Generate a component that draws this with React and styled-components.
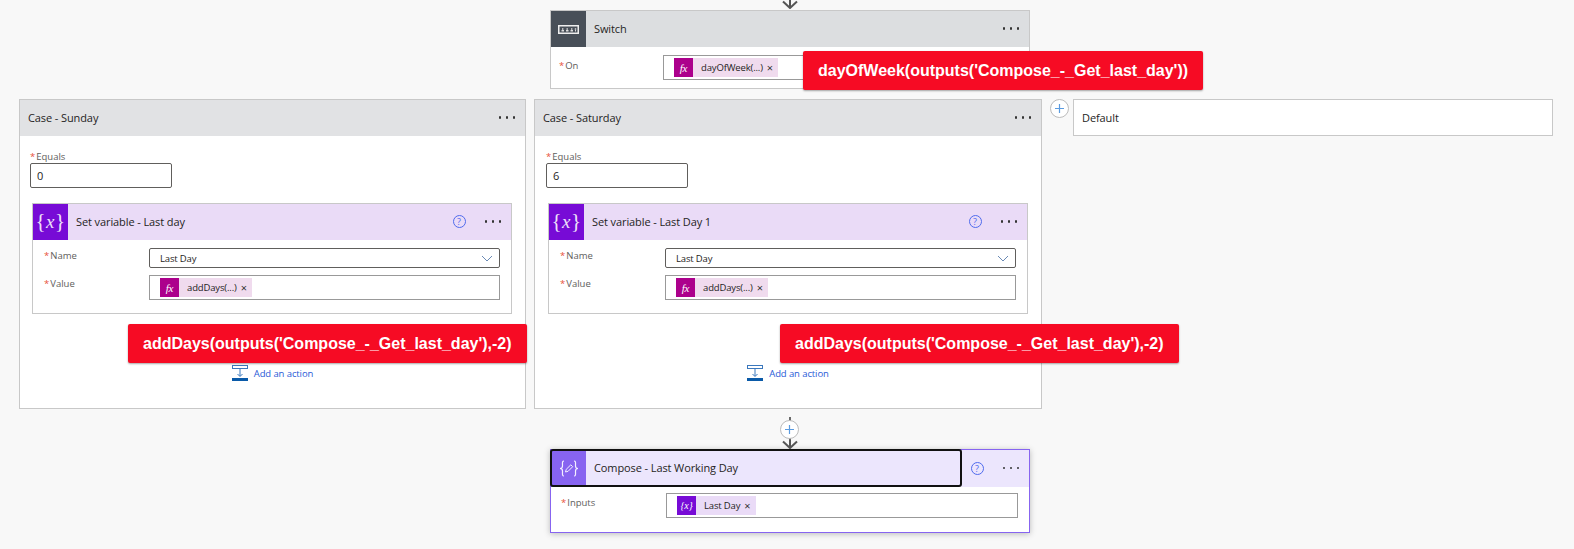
import React from 'react';
import styled, { createGlobalStyle } from 'styled-components';

const Global = createGlobalStyle`
  html, body { margin: 0; padding: 0; background: #f8f8f8; }
  body { font-family: "Open Sans", "Noto Sans", sans-serif; font-size: 11px; color: #252423; }
`;

const Page = styled.div`
  position: relative;
  width: 1574px;
  height: 549px;
  overflow: hidden;
  display: flex;
  flex-direction: column;
  background: #f8f8f8;
`;

const TopArrow = styled.div`
  height: 10px;
  padding-left: 782px;
  line-height: 0;
`;

const Card = styled.div`
  position: relative;
  box-sizing: border-box;
  width: 480px;
  flex: none;
  background: #fff;
  border: 1px solid ${(p) => p.$border || '#c8c8c8'};
  box-shadow: ${(p) => (p.$shadow ? '0 1px 6px rgba(0,0,0,.25)' : 'none')};
`;

const CenterCard = styled(Card)`
  margin-left: 550px;
  height: ${(p) => p.$h}px;
`;

const Header = styled.div`
  position: relative;
  display: flex;
  align-items: center;
  height: ${(p) => p.$h || 36}px;
  background: ${(p) => p.$bg || '#e1e2e4'};
`;

const IconBox = styled.div`
  width: 35px;
  align-self: stretch;
  flex: none;
  display: flex;
  align-items: center;
  justify-content: center;
  background: ${(p) => p.$bg};
  color: #fff;
`;

const Title = styled.div`
  flex: 1;
  padding: 0 0 2px 8px;
  font-size: 11px;
  letter-spacing: -0.1px;
  color: #252423;
  white-space: nowrap;
`;

const Dots = styled.div`
  display: flex;
  gap: 4.5px;
  margin-right: 10px;
  margin-bottom: 1px;
  & > i { width: 2.5px; height: 2.5px; border-radius: 50%; background: #333; display: block; }
`;

const Help = styled.div`
  width: 13px;
  height: 13px;
  box-sizing: border-box;
  border: 1px solid #4f6bed;
  border-radius: 50%;
  color: #4f6bed;
  font-size: 9px;
  line-height: 11px;
  text-align: center;
  margin: 0 19px 1px 0;
`;

const Row = styled.div`
  display: flex;
  align-items: flex-start;
  padding-left: ${(p) => p.$left}px;
  padding-top: ${(p) => p.$top}px;
  padding-right: ${(p) => p.$right || 0}px;
`;

const Label = styled.div`
  width: ${(p) => p.$w}px;
  flex: none;
  padding-top: ${(p) => p.$top || 0}px;
  font-size: 9.5px;
  line-height: 14px;
  color: #605e5c;
  white-space: nowrap;
  & > b { color: #e8503a; font-weight: 400; margin-right: 1px; }
`;

const Field = styled.div`
  box-sizing: border-box;
  flex: ${(p) => (p.$w ? 'none' : 1)};
  width: ${(p) => (p.$w ? `${p.$w}px` : 'auto')};
  display: flex;
  align-items: center;
  justify-content: space-between;
  height: ${(p) => p.$h || 25}px;
  padding: 0 6px 0 ${(p) => p.$pad || 10}px;
  background: #fff;
  border: 1px solid ${(p) => p.$border || '#999'};
  border-radius: ${(p) => (p.$dark ? 2 : 0)}px;
`;

const Chip = styled.div`
  display: flex;
  align-items: center;
  height: 19px;
  background: ${(p) => p.$bg};
  font-size: 9.5px;
  letter-spacing: -0.15px;
  color: #252423;
  white-space: nowrap;
  & > span { margin-left: 8px; }
  & > em { font-style: normal; font-size: 11px; color: #333; margin: 0 5px 0 4px; }
`;

const PlainValue = styled.span`
  font-size: 9.5px;
  letter-spacing: -0.15px;
  color: #252423;
`;

const ChipIcon = styled.div`
  width: 19px;
  height: 19px;
  flex: none;
  display: flex;
  align-items: center;
  justify-content: center;
  background: ${(p) => p.$bg};
  color: #fff;
  font-family: "Liberation Serif", serif;
  font-style: italic;
  font-size: ${(p) => p.$size || 11}px;
`;

const Note = styled.div`
  position: absolute;
  left: ${(p) => p.$left}px;
  top: ${(p) => p.$top}px;
  height: 39px;
  box-sizing: border-box;
  padding: 0 15px;
  display: flex;
  align-items: center;
  background: #f60b24;
  border-radius: 2px;
  box-shadow: 0 1px 2px rgba(0,0,0,.35);
  color: #fff;
  font-family: "Liberation Sans", Arial, sans-serif;
  font-weight: 700;
  font-size: 16px;
  white-space: nowrap;
  z-index: 2;
`;

const CaseRow = styled.div`
  display: flex;
  align-items: flex-start;
  padding-left: 19px;
  margin-top: 10px;
  gap: 8px;
`;

const CaseCard = styled(Card)`
  width: ${(p) => p.$w || 508}px;
  height: 310px;
`;

const Body = styled.div`
  padding: 14px 0 0 ${(p) => p.$left}px;
`;

const EqualsLabel = styled(Label)`
  line-height: 13px;
  height: 13px;
`;

const EqualsInput = styled.div`
  box-sizing: border-box;
  width: 141.5px;
  height: 25px;
  padding-left: 6px;
  display: flex;
  align-items: center;
  border: 1px solid #605e5c;
  border-radius: 2px;
  font-size: 11px;
  color: #252423;
`;

const InnerWrap = styled.div`
  padding-left: ${(p) => p.$left}px;
`;

const Inner = styled(Card)`
  margin-top: 15px;
  height: 111px;
`;

const AddAction = styled.div`
  display: flex;
  align-items: center;
  justify-content: center;
  gap: 6px;
  margin: 51px 0 0 ${(p) => -p.$left}px;
  font-size: 9.5px;
  letter-spacing: -0.1px;
  color: #2a5bd7;
`;

const DefaultWrap = styled.div`
  display: flex;
  align-items: flex-start;
  gap: 4px;
`;

const Plus = styled.div`
  box-sizing: border-box;
  width: 19px;
  height: 19px;
  flex: none;
  display: flex;
  align-items: center;
  justify-content: center;
  background: #fff;
  border: 1.5px solid #bcbcbc;
  border-radius: 50%;
  position: relative;
`;

const ConnectorPlus = styled(Plus)`
  margin-top: 3px;
  z-index: 1;
`;

const DefaultCard = styled.div`
  box-sizing: border-box;
  width: 480px;
  height: 37px;
  padding-left: 8px;
  display: flex;
  align-items: center;
  background: #fff;
  border: 1px solid #c8c8c8;
  font-size: 11px;
  letter-spacing: -0.1px;
`;

const Connector = styled.div`
  position: relative;
  height: 40px;
  display: flex;
  flex-direction: column;
  align-items: center;
  width: 19px;
  margin-left: 780px;
  padding-top: 8px;
  box-sizing: border-box;
  &::before {
    content: '';
    position: absolute;
    left: 8.5px;
    top: 8px;
    width: 2px;
    height: 26px;
    background: #6a6a6a;
  }
`;

const ConnectorArrow = styled.div`
  position: absolute;
  left: 1.5px;
  top: 31px;
  line-height: 0;
  z-index: 2;
`;

const FocusRing = styled.div`
  position: absolute;
  left: -1px;
  top: -1px;
  width: 412px;
  height: 38px;
  box-sizing: border-box;
  border: 2px solid #111;
  border-radius: 3px;
  pointer-events: none;
`;

const Serif = styled.span`
  font-family: "Liberation Serif", serif;
  font-size: ${(p) => p.$size}px;
  line-height: 1;
  letter-spacing: 0.5px;
  opacity: .88;
  margin-bottom: 2px;
  & > i { font-size: ${(p) => p.$size - 2}px; }
`;

const MoreDots = () => (
  <Dots><i /><i /><i /></Dots>
);

const ArrowDown = () => (
  <svg width="16" height="9" viewBox="0 0 16 9" fill="none" stroke="#555" strokeWidth="2">
    <path d="M8 0V8M1 1.5L8 8L15 1.5" />
  </svg>
);

const PlusIcon = () => (
  <svg width="9" height="9" viewBox="0 0 9 9" stroke="#5b9be0" strokeWidth="1.2">
    <path d="M4.5 0V9M0 4.5H9" />
  </svg>
);

const Chevron = () => (
  <svg width="12" height="7" viewBox="0 0 12 7" fill="none" stroke="#6a8ab5" strokeWidth="1">
    <path d="M1 1L6 6L11 1" />
  </svg>
);

const SwitchIcon = () => (
  <svg width="21" height="9" viewBox="0 0 21 9" fill="none">
    <rect x="0.75" y="0.75" width="19.5" height="7.5" stroke="#eee" strokeWidth="1.5" />
    <path d="M3.5 5.8h2.5M8 5.8h2.5M12.5 5.8h2.5M17 5.8h1M4.7 3.2v1.5M9.2 3.2v1.5M13.7 3.2v1.5M17.5 3.2v1.5" stroke="#ddd" strokeWidth="1.4" />
  </svg>
);

const AddIcon = () => (
  <svg width="16" height="16" viewBox="0 0 16 16" fill="none">
    <rect x="0.5" y="0.5" width="15" height="3" stroke="#3b78bd" />
    <path d="M8 4V11M5.5 9L8 11.5L10.5 9" stroke="#3b78bd" />
    <rect x="0" y="13" width="16" height="3" fill="#0a5aa8" />
  </svg>
);

const ComposeIcon = () => (
  <svg width="20" height="19" viewBox="0 0 20 19" fill="none" stroke="#f4f0ff">
    <path d="M5 2C3 2 3.5 4 3.5 7C3.5 8.5 3 9.5 1 9.5C3 9.5 3.5 10.5 3.5 12C3.5 15 3 17 5 17" strokeWidth="1.2" />
    <path d="M15 2C17 2 16.5 4 16.5 7C16.5 8.5 17 9.5 19 9.5C17 9.5 16.5 10.5 16.5 12C16.5 15 17 17 15 17" strokeWidth="1.2" />
    <path d="M6.5 13L7.2 10.4L11.8 5.8L13.7 7.7L9.1 12.3Z" strokeWidth="1" />
  </svg>
);

const VariableCard = ({ title }) => (
  <Inner>
    <Header $bg="#eadbf7">
      <IconBox $bg="#770bd6">
        <Serif $size={21}>{'{'}<i>x</i>{'}'}</Serif>
      </IconBox>
      <Title>{title}</Title>
      <Help>?</Help>
      <MoreDots />
    </Header>
    <Row $left={11} $top={8} $right={11}>
      <Label $w={105} $top={1}><b>*</b>Name</Label>
      <Field $h={20} $border="#605e5c" $dark>
        <PlainValue>Last Day</PlainValue>
        <Chevron />
      </Field>
    </Row>
    <Row $left={11} $top={7} $right={11}>
      <Label $w={105} $top={2}><b>*</b>Value</Label>
      <Field $pad={10}>
        <Chip $bg="#f0dbee">
          <ChipIcon $bg="#ac008c"><span>fx</span></ChipIcon>
          <span>addDays(...)</span>
          <em>×</em>
        </Chip>
      </Field>
    </Row>
  </Inner>
);

const CaseBlock = ({ w, title, value, left, varTitle, noteLeft }) => (
  <CaseCard $w={w}>
    <Header>
      <Title>{title}</Title>
      <MoreDots />
    </Header>
    <Body $left={left}>
      <EqualsLabel $w={100}><b>*</b>Equals</EqualsLabel>
      <EqualsInput>{value}</EqualsInput>
    </Body>
    <InnerWrap $left={left + 2}>
      <VariableCard title={varTitle} />
      <AddAction $left={left + 2}>
        <AddIcon />
        <span>Add an action</span>
      </AddAction>
    </InnerWrap>
    <Note $left={noteLeft} $top={224}>addDays(outputs('Compose_-_Get_last_day'),-2)</Note>
  </CaseCard>
);

export default function App() {
  return (
    <Page>
      <Global />
      <TopArrow><ArrowDown /></TopArrow>

      <CenterCard $h={79}>
        <Header $h={36} $bg="#dcdee0">
          <IconBox $bg="#484f58"><SwitchIcon /></IconBox>
          <Title>Switch</Title>
          <MoreDots />
        </Header>
        <Row $left={8} $top={8}>
          <Label $w={104} $top={4}><b>*</b>On</Label>
          <Field $pad={10} $w={300}>
            <Chip $bg="#f0dbee">
              <ChipIcon $bg="#ac008c"><span>fx</span></ChipIcon>
              <span>dayOfWeek(...)</span>
              <em>×</em>
            </Chip>
          </Field>
        </Row>
        <Note $left={252} $top={40}>dayOfWeek(outputs('Compose_-_Get_last_day'))</Note>
      </CenterCard>

      <CaseRow>
        <CaseBlock w={507} title="Case - Sunday" value="0" left={10} varTitle="Set variable - Last day" noteLeft={108} />
        <CaseBlock w={508} title="Case - Saturday" value="6" left={11} varTitle="Set variable - Last Day 1" noteLeft={245} />
        <DefaultWrap>
          <Plus><PlusIcon /></Plus>
          <DefaultCard>Default</DefaultCard>
        </DefaultWrap>
      </CaseRow>

      <Connector>
        <ConnectorPlus><PlusIcon /></ConnectorPlus>
        <ConnectorArrow><ArrowDown /></ConnectorArrow>
      </Connector>

      <CenterCard $h={84} $border="#8764f0" $shadow>
        <Header $h={37} $bg="#ece6fd">
          <IconBox $bg="#8764f0"><ComposeIcon /></IconBox>
          <Title>Compose - Last Working Day</Title>
          <Help>?</Help>
          <MoreDots />
          <FocusRing />
        </Header>
        <Row $left={10} $top={6} $right={11}>
          <Label $w={105} $top={3}><b>*</b>Inputs</Label>
          <Field $pad={10}>
            <Chip $bg="#eadbf7">
              <ChipIcon $bg="#770bd6" $size={10}><span>{'{x}'}</span></ChipIcon>
              <span>Last Day</span>
              <em>×</em>
            </Chip>
          </Field>
        </Row>
      </CenterCard>
    </Page>
  );
}
